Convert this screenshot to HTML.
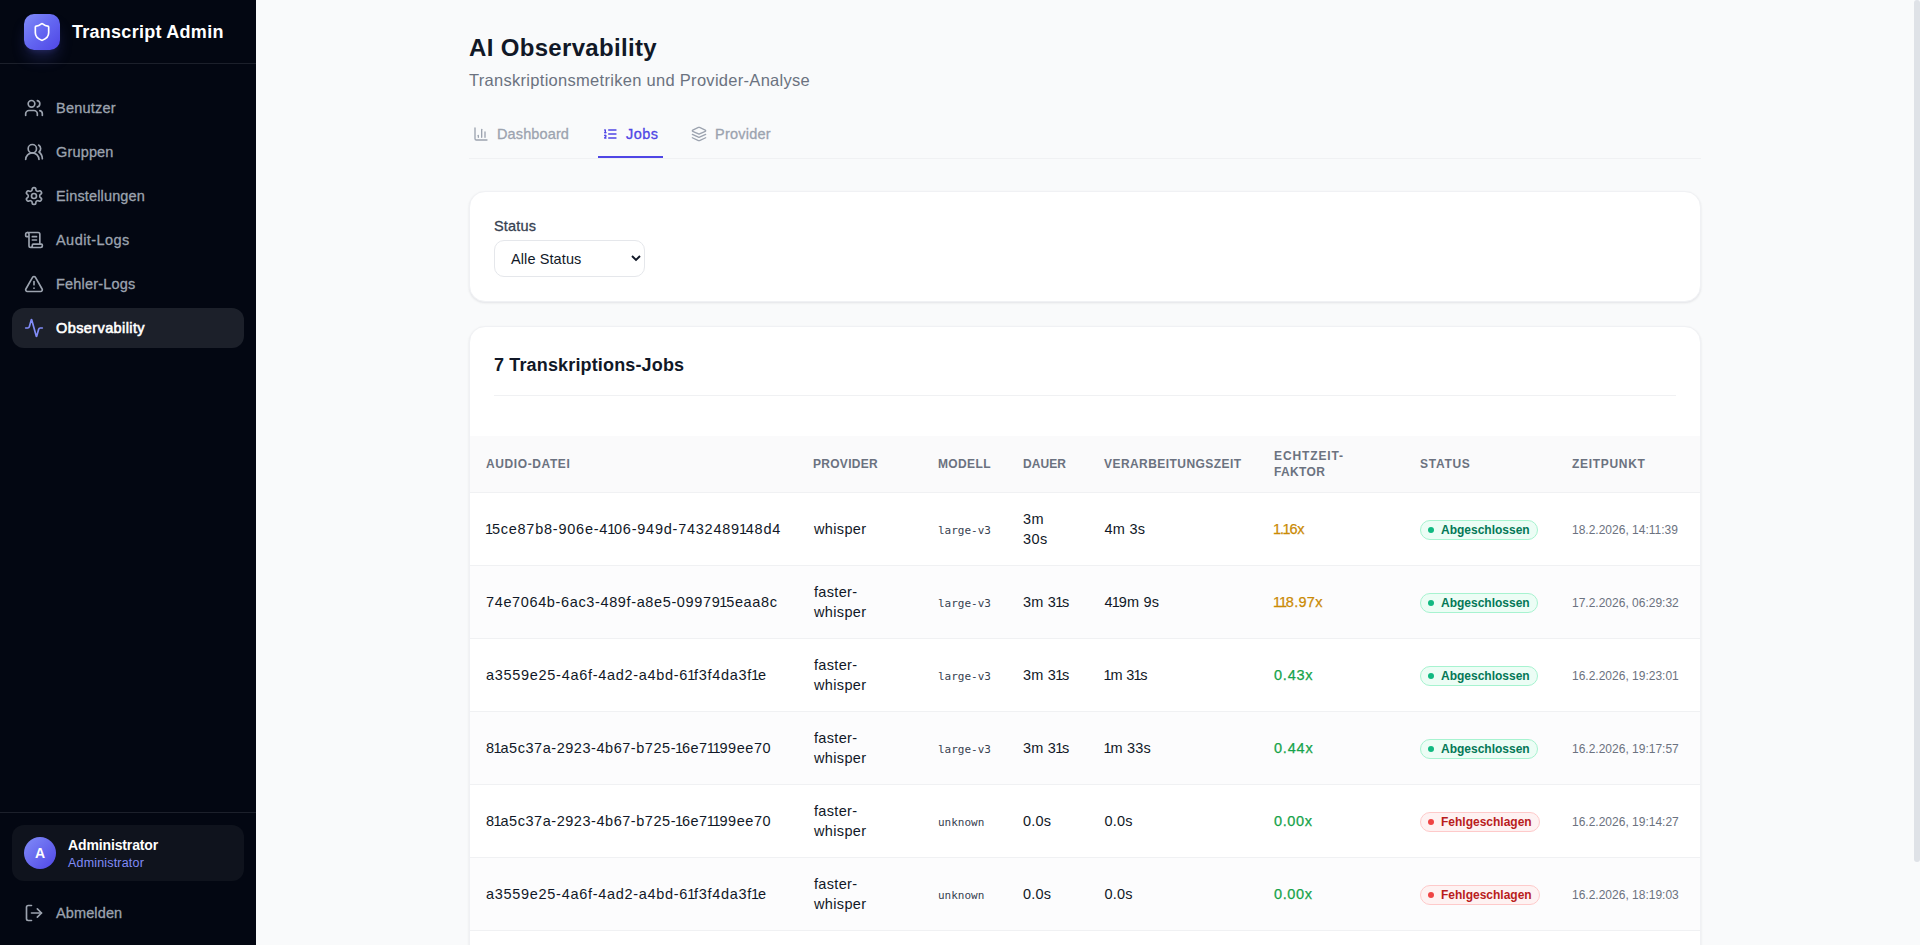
<!DOCTYPE html>
<html lang="de">
<head>
<meta charset="utf-8">
<title>Transcript Admin – AI Observability</title>
<style>
*{box-sizing:border-box;margin:0;padding:0}
html,body{width:1920px;height:945px;overflow:hidden}
body{font-family:"Liberation Sans",Arial,sans-serif;background:#f9fafb;color:#111827;position:relative;-webkit-font-smoothing:antialiased}
svg{display:block}
.ico{fill:none;stroke:currentColor;stroke-width:2;stroke-linecap:round;stroke-linejoin:round}

/* ---------- sidebar ---------- */
.sidebar{position:absolute;left:0;top:0;width:256px;height:945px;background:#030712;color:#9ca3af}
.brand{position:absolute;left:0;top:0;width:256px;height:64px;border-bottom:1px solid #1c202b}
.logo{position:absolute;left:24px;top:14px;width:36px;height:36px;border-radius:10px;background:linear-gradient(135deg,#818cf8 0%,#6366f1 50%,#4f46e5 100%);box-shadow:0 10px 15px -3px rgba(99,102,241,.25),0 4px 6px -4px rgba(99,102,241,.25);color:#fff}
.logo svg{position:absolute;left:8px;top:8px;width:20px;height:20px}
.brand-name{position:absolute;left:72px;top:18px;font-size:18px;line-height:28px;font-weight:700;color:#fff;white-space:nowrap;letter-spacing:.27px}
.nav a{position:absolute;left:12px;width:232px;height:40px;border-radius:12px;color:#9ca3af;text-decoration:none;font-size:14.5px;font-weight:500;line-height:20px;display:block}
.nav a svg{position:absolute;left:12px;top:10px;width:20px;height:20px}
.nav a span{position:absolute;left:44px;top:10px;white-space:nowrap;-webkit-text-stroke:.3px currentColor}
.nav a.active span{-webkit-text-stroke:.6px currentColor;letter-spacing:.4px}
.nav a.active{background:#1c202a;color:#fff;font-weight:400;font-size:14.5px}
.nav a.active svg{color:#818cf8}
.side-foot{position:absolute;left:0;top:812px;width:256px;height:133px;border-top:1px solid #1c202b}
.user{position:absolute;left:12px;top:12px;width:232px;height:56px;border-radius:12px;background:#0f131d}
.avatar{position:absolute;left:12px;top:12px;width:32px;height:32px;border-radius:50%;background:linear-gradient(135deg,#818cf8,#4f46e5);color:#fff;font-size:14px;font-weight:700;line-height:32px;text-align:center}
.uname{position:absolute;left:56px;top:10px;font-size:14px;line-height:20px;font-weight:700;color:#fff;white-space:nowrap;letter-spacing:-.13px}
.urole{position:absolute;left:56px;top:30px;font-size:12.5px;line-height:16px;color:#818cf8;white-space:nowrap;letter-spacing:.18px}
.logout{position:absolute;left:12px;top:80px;width:232px;height:40px;color:#9ca3af;letter-spacing:.12px;font-size:14.5px;line-height:20px;font-weight:500}
.logout svg{position:absolute;left:12px;top:10px;width:20px;height:20px}
.logout span{position:absolute;left:44px;top:10px;white-space:nowrap;-webkit-text-stroke:.3px currentColor}

/* ---------- main ---------- */
.main{position:absolute;left:256px;top:0;width:1664px;height:945px;overflow:hidden}
h1{position:absolute;left:213px;top:32px;font-size:24px;line-height:32px;font-weight:700;color:#111827;white-space:nowrap;letter-spacing:.33px}
.sub{position:absolute;left:213px;top:68px;font-size:16.5px;line-height:24px;color:#6b7280;white-space:nowrap;letter-spacing:.29px}
.tabs{position:absolute;left:213px;top:112px;width:1232px;height:47px;border-bottom:1px solid #f0f1f3}
.tab{position:absolute;top:0;height:46px;color:#9ca3af;font-size:14.5px;line-height:20px;font-weight:500;white-space:nowrap}
.tab svg{position:absolute;left:4px;top:14px;width:16px;height:16px}
.tab span{position:absolute;left:28px;top:12px;-webkit-text-stroke:.3px currentColor}
.tab.active{color:#4f46e5;border-bottom:2px solid #4f46e5}

.card{position:absolute;left:213px;width:1232px;background:#fff;border:1px solid #f0f1f4;border-radius:16px;box-shadow:0 1px 3px rgba(16,24,40,.06),0 1px 2px rgba(16,24,40,.04)}
.card.filter{top:191px;height:111px}
.flabel{-webkit-text-stroke:.3px currentColor;position:absolute;left:24px;top:24px;letter-spacing:.18px;font-size:14.5px;line-height:20px;font-weight:500;color:#374151}
.select{position:absolute;left:24px;top:48px;width:151px;height:37px;border:1px solid #e5e7eb;border-radius:10px;background:#fff;font-size:14.5px;line-height:36px;color:#111827;padding-left:16px;letter-spacing:.1px}
.select svg{position:absolute;left:134.9px;top:10.9px;width:12px;height:12px}
.card.jobs{top:326px;height:700px;border-bottom-left-radius:0;border-bottom-right-radius:0}
.jtitle{position:absolute;left:24px;top:24px;width:1182px;height:45px;border-bottom:1px solid #f0f1f3;font-size:18px;line-height:28px;font-weight:700;color:#111827;white-space:nowrap;letter-spacing:.15px}

table{position:absolute;left:0;top:109px;width:1230px;border-collapse:collapse;table-layout:fixed}
th{height:56px;background:#fafafb;border-bottom:1px solid #f0f1f3;text-align:left;padding:0 16px;font-size:12px;line-height:16px;font-weight:700;color:#6b7280;text-transform:uppercase;letter-spacing:.6px;vertical-align:middle}
td{height:73px;border-bottom:1px solid #f0f1f3;padding:0 16px;font-size:14.5px;white-space:nowrap;line-height:20px;color:#111827;vertical-align:middle}
tr:nth-child(even) td{background:#fcfcfd}
.n1{margin-left:-1px;letter-spacing:-1.2px}
td.mono{font-family:"DejaVu Sans Mono","Liberation Mono",monospace;font-size:11px;color:#374151;padding-top:5px}
td.time{font-size:12px;color:#6b7280;white-space:nowrap;padding-top:2px}
.rt-warn{color:#ca8a04;font-weight:500;-webkit-text-stroke:.25px currentColor}
.rt-ok{color:#16a34a;font-weight:500;-webkit-text-stroke:.25px currentColor}
td:nth-child(2){padding-left:17px}
td:nth-child(5){padding-left:16.5px}
.badge{display:inline-block;top:1px;height:20px;border-radius:10px;padding:0 7px 0 20px;font-size:12px;line-height:18px;font-weight:700;position:relative;white-space:nowrap;vertical-align:middle}
.badge i{position:absolute;left:7px;top:6px;width:6px;height:6px;border-radius:50%}
.badge.ok{background:#ecfdf5;border:1px solid #a7f3d0;color:#047857}
.badge.ok i{background:#10b981}
.badge.err{background:#fef2f2;border:1px solid #fecaca;color:#b91c1c}
.badge.err i{background:#ef4444}
.scroll{position:absolute;left:1914px;top:0;width:6px;height:862px;border-radius:3px;background:#dfe2e7}
</style>
</head>
<body>
<aside class="sidebar">
  <div class="brand">
    <div class="logo"><svg class="ico" viewBox="0 0 24 24"><path d="M20 13c0 5-3.5 7.500-7.660 8.950a1 1 0 0 1-.670-.010C7.500 20.500 4 18 4 13V6a1 1 0 0 1 1-1c2 0 4.500-1.200 6.240-2.720a1.170 1.170 0 0 1 1.520 0C14.510 3.810 17 5 19 5a1 1 0 0 1 1 1z"/></svg></div>
    <div class="brand-name">Transcript Admin</div>
  </div>
  <nav class="nav">
    <a style="top:88px"><svg class="ico" viewBox="0 0 24 24"><path d="M16 21v-2a4 4 0 0 0-4-4H6a4 4 0 0 0-4 4v2"/><circle cx="9" cy="7" r="4"/><path d="M22 21v-2a4 4 0 0 0-3-3.870"/><path d="M16 3.130a4 4 0 0 1 0 7.750"/></svg><span style="letter-spacing:.21px">Benutzer</span></a>
    <a style="top:132px"><svg class="ico" viewBox="0 0 24 24"><path d="M18 21a8 8 0 0 0-16 0"/><circle cx="10" cy="8" r="5"/><path d="M22 20c0-3.370-2-6.500-4-8a5 5 0 0 0-.450-8.300"/></svg><span style="letter-spacing:.16px">Gruppen</span></a>
    <a style="top:176px"><svg class="ico" viewBox="0 0 24 24"><path d="M12.220 2h-.440a2 2 0 0 0-2 2v.180a2 2 0 0 1-1 1.730l-.430.250a2 2 0 0 1-2 0l-.150-.080a2 2 0 0 0-2.730.730l-.220.380a2 2 0 0 0 .730 2.730l.150.100a2 2 0 0 1 1 1.720v.510a2 2 0 0 1-1 1.740l-.150.090a2 2 0 0 0-.730 2.730l.220.380a2 2 0 0 0 2.730.730l.150-.080a2 2 0 0 1 2 0l.430.250a2 2 0 0 1 1 1.730V20a2 2 0 0 0 2 2h.440a2 2 0 0 0 2-2v-.180a2 2 0 0 1 1-1.730l.430-.250a2 2 0 0 1 2 0l.150.080a2 2 0 0 0 2.730-.730l.220-.390a2 2 0 0 0-.730-2.730l-.150-.080a2 2 0 0 1-1-1.740v-.500a2 2 0 0 1 1-1.740l.150-.090a2 2 0 0 0 .730-2.730l-.220-.380a2 2 0 0 0-2.730-.730l-.150.080a2 2 0 0 1-2 0l-.430-.250a2 2 0 0 1-1-1.730V4a2 2 0 0 0-2-2z"/><circle cx="12" cy="12" r="3"/></svg><span style="letter-spacing:.15px">Einstellungen</span></a>
    <a style="top:220px"><svg class="ico" viewBox="0 0 24 24"><path d="M15 12h-5"/><path d="M15 8h-5"/><path d="M19 17V5a2 2 0 0 0-2-2H4"/><path d="M8 21h12a2 2 0 0 0 2-2v-1a1 1 0 0 0-1-1H11a1 1 0 0 0-1 1v1a2 2 0 1 1-4 0V5a2 2 0 1 0-4 0v2a1 1 0 0 0 1 1h3"/></svg><span style="letter-spacing:.45px">Audit-Logs</span></a>
    <a style="top:264px"><svg class="ico" viewBox="0 0 24 24"><path d="m21.730 18-8-14a2 2 0 0 0-3.480 0l-8 14A2 2 0 0 0 4 21h16a2 2 0 0 0 1.730-3"/><path d="M12 9v4"/><path d="M12 17h.01"/></svg><span style="letter-spacing:.18px">Fehler-Logs</span></a>
    <a class="active" style="top:308px"><svg class="ico" viewBox="0 0 24 24"><path d="M22 12h-2.480a2 2 0 0 0-1.930 1.460l-2.350 8.360a.250.250 0 0 1-.480 0L9.240 2.180a.250.250 0 0 0-.480 0l-2.350 8.360A2 2 0 0 1 4.490 12H2"/></svg><span>Observability</span></a>
  </nav>
  <div class="side-foot">
    <div class="user">
      <div class="avatar">A</div>
      <div class="uname">Administrator</div>
      <div class="urole">Administrator</div>
    </div>
    <div class="logout"><svg class="ico" viewBox="0 0 24 24"><path d="M9 21H5a2 2 0 0 1-2-2V5a2 2 0 0 1 2-2h4"/><polyline points="16 17 21 12 16 7"/><line x1="21" x2="9" y1="12" y2="12"/></svg><span>Abmelden</span></div>
  </div>
</aside>

<main class="main">
  <h1>AI Observability</h1>
  <p class="sub">Transkriptionsmetriken und Provider-Analyse</p>
  <div class="tabs">
    <div class="tab" style="left:0;width:105px"><svg class="ico" viewBox="0 0 24 24"><path d="M3 3v16a2 2 0 0 0 2 2h16"/><path d="M18 17V9"/><path d="M13 17V5"/><path d="M8 17v-3"/></svg><span style="letter-spacing:.12px">Dashboard</span></div>
    <div class="tab active" style="left:129px;width:65px"><svg class="ico" viewBox="0 0 24 24"><path d="M10 12h11"/><path d="M10 18h11"/><path d="M10 6h11"/><path d="M4 10h2"/><path d="M4 6h1v4"/><path d="M6 18H4c0-1 2-2 2-3s-1-1.500-2-1"/></svg><span style="letter-spacing:.48px">Jobs</span></div>
    <div class="tab" style="left:218px;width:90px"><svg class="ico" viewBox="0 0 24 24"><path d="m12.830 2.180a2 2 0 0 0-1.660 0L2.600 6.080a1 1 0 0 0 0 1.830l8.580 3.910a2 2 0 0 0 1.660 0l8.580-3.900a1 1 0 0 0 0-1.830Z"/><path d="m22 17.650-9.170 4.160a2 2 0 0 1-1.660 0L2 17.650"/><path d="m22 12.650-9.170 4.160a2 2 0 0 1-1.660 0L2 12.650"/></svg><span style="letter-spacing:.23px">Provider</span></div>
  </div>

  <section class="card filter">
    <div class="flabel">Status</div>
    <div class="select">Alle Status<svg viewBox="0 0 12 12" fill="none" stroke="#111827" stroke-width="1.9"><path d="M2 4 6 8l4-4"/></svg></div>
  </section>

  <section class="card jobs">
    <div class="jtitle">7 Transkriptions-Jobs</div>
    <table>
      <colgroup><col style="width:327px"><col style="width:125px"><col style="width:85px"><col style="width:81px"><col style="width:170px"><col style="width:146px"><col style="width:152px"><col style="width:144px"></colgroup>
      <thead><tr><th>Audio-Datei</th><th style="letter-spacing:.29px">Provider</th><th style="letter-spacing:.36px">Modell</th><th style="letter-spacing:.08px">Dauer</th><th style="letter-spacing:.44px">Verarbeitungszeit</th><th><span style="letter-spacing:.89px">Echtzeit-</span><br><span style="letter-spacing:.34px">Faktor</span></th><th style="letter-spacing:.72px">Status</th><th style="letter-spacing:.69px">Zeitpunkt</th></tr></thead>
      <tbody>
        <tr><td><span style="letter-spacing:0.76px"><span class="n1">1</span>5ce87b8-906e-4<span class="n1">1</span>06-949d-7432489<span class="n1">1</span>48d4</span></td><td><span style="letter-spacing:0.36px">whisper</span></td><td class="mono">large-v3</td><td><span style="letter-spacing:0.44px">3m</span><br><span style="letter-spacing:0.45px">30s</span></td><td><span style="letter-spacing:0.28px">4m 3s</span></td><td class="rt-warn"><span style="letter-spacing:-0.3px"><span class="n1">1</span>.<span class="n1">1</span>6x</span></td><td><span class="badge ok"><i></i>Abgeschlossen</span></td><td class="time">18.2.2026, 14:11:39</td></tr>
        <tr><td><span style="letter-spacing:0.63px">74e7064b-6ac3-489f-a8e5-09979<span class="n1">1</span>5eaa8c</span></td><td><span style="letter-spacing:0.32px">faster-</span><br><span style="letter-spacing:0.36px">whisper</span></td><td class="mono">large-v3</td><td><span style="letter-spacing:0.23px">3m 3<span class="n1">1</span>s</span></td><td><span style="letter-spacing:0.21px">4<span class="n1">1</span>9m 9s</span></td><td class="rt-warn"><span style="letter-spacing:0.32px"><span class="n1">1</span><span class="n1">1</span>8.97x</span></td><td><span class="badge ok"><i></i>Abgeschlossen</span></td><td class="time">17.2.2026, 06:29:32</td></tr>
        <tr><td><span style="letter-spacing:0.7px">a3559e25-4a6f-4ad2-a4bd-6<span class="n1">1</span>f3f4da3f<span class="n1">1</span>e</span></td><td><span style="letter-spacing:0.32px">faster-</span><br><span style="letter-spacing:0.36px">whisper</span></td><td class="mono">large-v3</td><td><span style="letter-spacing:0.23px">3m 3<span class="n1">1</span>s</span></td><td><span style="letter-spacing:-0.06px"><span class="n1">1</span>m 3<span class="n1">1</span>s</span></td><td class="rt-ok"><span style="letter-spacing:0.78px">0.43x</span></td><td><span class="badge ok"><i></i>Abgeschlossen</span></td><td class="time">16.2.2026, 19:23:01</td></tr>
        <tr><td><span style="letter-spacing:0.54px">8<span class="n1">1</span>a5c37a-2923-4b67-b725-<span class="n1">1</span>6e7<span class="n1">1</span><span class="n1">1</span>99ee70</span></td><td><span style="letter-spacing:0.32px">faster-</span><br><span style="letter-spacing:0.36px">whisper</span></td><td class="mono">large-v3</td><td><span style="letter-spacing:0.23px">3m 3<span class="n1">1</span>s</span></td><td><span style="letter-spacing:0.23px"><span class="n1">1</span>m 33s</span></td><td class="rt-ok"><span style="letter-spacing:0.8px">0.44x</span></td><td><span class="badge ok"><i></i>Abgeschlossen</span></td><td class="time">16.2.2026, 19:17:57</td></tr>
        <tr><td><span style="letter-spacing:0.54px">8<span class="n1">1</span>a5c37a-2923-4b67-b725-<span class="n1">1</span>6e7<span class="n1">1</span><span class="n1">1</span>99ee70</span></td><td><span style="letter-spacing:0.32px">faster-</span><br><span style="letter-spacing:0.36px">whisper</span></td><td class="mono">unknown</td><td><span style="letter-spacing:0.16px">0.0s</span></td><td><span style="letter-spacing:0.16px">0.0s</span></td><td class="rt-ok"><span style="letter-spacing:0.63px">0.00x</span></td><td><span class="badge err"><i></i>Fehlgeschlagen</span></td><td class="time">16.2.2026, 19:14:27</td></tr>
        <tr><td><span style="letter-spacing:0.7px">a3559e25-4a6f-4ad2-a4bd-6<span class="n1">1</span>f3f4da3f<span class="n1">1</span>e</span></td><td><span style="letter-spacing:0.32px">faster-</span><br><span style="letter-spacing:0.36px">whisper</span></td><td class="mono">unknown</td><td><span style="letter-spacing:0.16px">0.0s</span></td><td><span style="letter-spacing:0.16px">0.0s</span></td><td class="rt-ok"><span style="letter-spacing:0.63px">0.00x</span></td><td><span class="badge err"><i></i>Fehlgeschlagen</span></td><td class="time">16.2.2026, 18:19:03</td></tr>
        <tr><td><span style="letter-spacing:0.76px"><span class="n1">1</span>5ce87b8-906e-4<span class="n1">1</span>06-949d-7432489<span class="n1">1</span>48d4</span></td><td><span style="letter-spacing:0.36px">whisper</span></td><td class="mono">unknown</td><td><span style="letter-spacing:0.16px">0.0s</span></td><td><span style="letter-spacing:0.16px">0.0s</span></td><td class="rt-ok"><span style="letter-spacing:0.63px">0.00x</span></td><td><span class="badge err"><i></i>Fehlgeschlagen</span></td><td class="time">16.2.2026, 18:02:11</td></tr>
      </tbody>
    </table>
  </section>
  <div class="scroll" style="left:1658px"></div>
</main>
</body>
</html>
